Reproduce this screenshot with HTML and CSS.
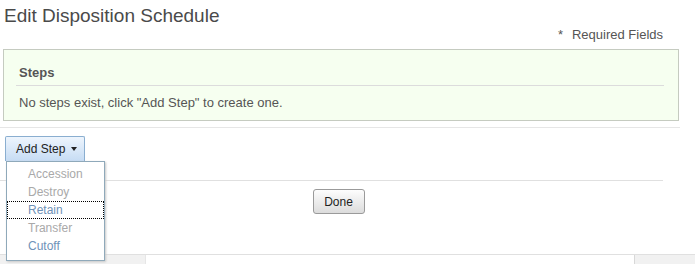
FILE: index.html
```html
<!DOCTYPE html>
<html lang="en">
<head>
  <meta charset="UTF-8" />
  <title>Edit Disposition Schedule</title>
  <link rel="stylesheet" href="styles.css">
</head>
<body>

  <h1>Edit Disposition Schedule</h1>

  <div class="required"><span class="star">*</span>Required Fields</div>

  <div class="steps-box">
    <h3>Steps</h3>
    <p>No steps exist, click "Add Step" to create one.</p>
  </div>

  <div class="add-row">
    <div class="menu-wrap">
      <button class="add-btn">Add Step <span class="caret"></span></button>
      <ul class="menu">
        <li class="off">Accession</li>
        <li class="off">Destroy</li>
        <li class="on focus">Retain</li>
        <li class="off">Transfer</li>
        <li class="on">Cutoff</li>
      </ul>
    </div>
  </div>

  <div class="done-row">
    <button class="done-btn">Done</button>
  </div>

  <div class="footer">
    <div class="side left"></div>
    <div class="mid"></div>
    <div class="side right"></div>
  </div>

</body>
</html>
```

FILE: styles.css
```css
body {
  margin: 0;
  font-family: "Liberation Sans", Arial, sans-serif;
  color: #555;
  background: #fff;
  width: 695px;
  height: 264px;
  overflow: hidden;
}
h1 {
  margin: 0;
  padding: 5px 0 0 4px;
  font-size: 19px;
  font-weight: normal;
  line-height: 21px;
  color: #4a4a4a;
}
.required {
  text-align: right;
  padding-right: 32px;
  margin-top: 1px;
  font-size: 13px;
  line-height: 16px;
  color: #555;
}
.star {
  margin-right: 9px;
}
.steps-box {
  margin: 6px 16px 0 3px;
  height: 70px;
  border: 1px solid #c5cbc0;
  background: #f6fff0;
  padding: 0 14px 0 12px;
}
.steps-box h3 {
  margin: 0;
  padding: 15px 0 5px 3px;
  font-size: 13px;
  line-height: 15px;
  color: #555;
  border-bottom: 1px solid #dcdcdc;
}
.steps-box p {
  margin: 0;
  padding: 9px 0 0 3px;
  font-size: 13px;
  line-height: 15px;
}
.add-row {
  margin-top: 6px;
  border-top: 1px solid #e6e6e6;
  width: 680px;
  height: 53px;
  padding: 8px 0 0 5px;
  box-sizing: border-box;
}
.menu-wrap {
  position: relative;
  width: 100px;
}
.add-btn {
  height: 25px;
  width: 80px;
  padding: 0 0 0 10px;
  text-align: left;
  font-family: inherit;
  font-size: 12px;
  color: #222;
  border: 1px solid #8aaed0;
  border-bottom: none;
  border-radius: 2px 2px 0 0;
  background: linear-gradient(#eef5fd, #c6dcf4);
}
.caret {
  display: inline-block;
  margin-left: 2px;
  vertical-align: 2px;
  border-left: 3px solid transparent;
  border-right: 3px solid transparent;
  border-top: 4px solid #222;
}
.menu {
  position: absolute;
  top: 25px;
  left: 1px;
  width: 97px;
  margin: 0;
  padding: 3px 0 5px;
  list-style: none;
  background: #fff;
  border: 1px solid #8fa9ba;
  box-shadow: 1px 1px 2px #c8c8c8;
  z-index: 2;
}
.menu li {
  font-size: 12px;
  line-height: 16px;
  padding-left: 20px;
  border: 1px solid transparent;
}
.menu .off {
  color: #a9a9a9;
}
.menu .on {
  color: #6f92b8;
}
.menu .focus {
  border: 1px dotted #000;
}
.done-row {
  border-top: 1px solid #e0e0e0;
  width: 663px;
  height: 74px;
  padding-top: 8px;
  box-sizing: border-box;
  text-align: center;
}
.done-btn {
  margin-left: 14px;
  height: 25px;
  width: 52px;
  font-family: inherit;
  font-size: 12px;
  color: #222;
  border: 1px solid #9a9a9a;
  border-radius: 3px;
  background: linear-gradient(#fdfdfd, #dcdcdc);
}
.footer {
  display: flex;
  height: 10px;
  border-top: 1px solid #e0e0e0;
  width: 695px;
}
.side {
  background: #f1f1f1;
}
.left {
  width: 145px;
}
.mid {
  width: 488px;
  border-left: 1px solid #e6e6e6;
  border-right: 1px solid #d8d8d8;
}
.right {
  flex: 1;
}
```
